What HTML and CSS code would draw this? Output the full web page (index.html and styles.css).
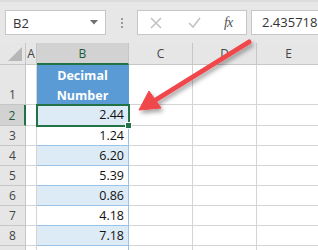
FILE: index.html
```html
<!DOCTYPE html>
<html lang="en">
<head>
    <meta charset="UTF-8">
    <title>Decimal Number</title>
    <link rel="stylesheet" href="styles.css">
</head>
<body>
    <div class="sheet">
        <div class="bar">
            <div class="namebox">
                <span>B2</span>
                <svg class="caret" width="8" height="5" viewBox="0 0 8 5"><path d="M0 0h8L4 4.5z" fill="#6f6f6f"/></svg>
            </div>
            <div class="grip"><i></i><i></i><i></i></div>
            <div class="fbtns">
                <svg class="btn-x" width="12" height="12" viewBox="0 0 12 12"><path d="M1 1l10 10M11 1L1 11" stroke="#c2c2c2" stroke-width="1.6" fill="none"/></svg>
                <svg class="btn-ok" width="13" height="11" viewBox="0 0 13 11"><path d="M1 6l4 4 7-9" stroke="#c2c2c2" stroke-width="1.6" fill="none"/></svg>
                <span class="fx">fx</span>
            </div>
            <div class="formula">2.435718</div>
        </div>

        <div class="grid">
            <div class="hd corner"><span class="tri"></span></div>
            <div class="hd col">A</div>
            <div class="hd col sel">B</div>
            <div class="hd col">C</div>
            <div class="hd col">D</div>
            <div class="hd col">E</div>

            <div class="hd row">1</div>
            <div class="c"></div>
            <div class="c title">Decimal<br>Number</div>
            <div class="c"></div><div class="c"></div><div class="c"></div>

            <div class="hd row rsel">2</div>
            <div class="c"></div>
            <div class="c num alt active">2.44</div>
            <div class="c"></div><div class="c"></div><div class="c"></div>

            <div class="hd row">3</div>
            <div class="c"></div>
            <div class="c num">1.24</div>
            <div class="c"></div><div class="c"></div><div class="c"></div>

            <div class="hd row">4</div>
            <div class="c"></div>
            <div class="c num alt">6.20</div>
            <div class="c"></div><div class="c"></div><div class="c"></div>

            <div class="hd row">5</div>
            <div class="c"></div>
            <div class="c num">5.39</div>
            <div class="c"></div><div class="c"></div><div class="c"></div>

            <div class="hd row">6</div>
            <div class="c"></div>
            <div class="c num alt">0.86</div>
            <div class="c"></div><div class="c"></div><div class="c"></div>

            <div class="hd row">7</div>
            <div class="c"></div>
            <div class="c num">4.18</div>
            <div class="c"></div><div class="c"></div><div class="c"></div>

            <div class="hd row">8</div>
            <div class="c"></div>
            <div class="c num alt">7.18</div>
            <div class="c"></div><div class="c"></div><div class="c"></div>

            <div class="hd row"></div>
            <div class="c"></div>
            <div class="c num"></div>
            <div class="c"></div><div class="c"></div><div class="c"></div>
        </div>

        <!-- callout arrow over the sheet -->
        <svg class="arrow" width="318" height="250" viewBox="0 0 318 250">
            <defs>
                <filter id="shadow" x="-20%" y="-20%" width="140%" height="140%">
                    <feDropShadow dx="2" dy="3" stdDeviation="2" flood-color="#000" flood-opacity="0.35"/>
                </filter>
            </defs>
            <g filter="url(#shadow)" fill="#f0474c" stroke="#f0474c">
                <line x1="249" y1="42" x2="154" y2="101" stroke-width="5" stroke-linecap="round"/>
                <polygon points="139,110 149,91 161,108" stroke-width="1" stroke-linejoin="round"/>
            </g>
        </svg>
    </div>
</body>
</html>
```

FILE: styles.css
```css
body {
    margin: 0;
    background: #fff;
    font-family: "Open Sans", "Noto Sans", sans-serif;
}
.sheet {
    position: relative;
    width: 318px;
    height: 250px;
    overflow: hidden;
}
.bar {
    height: 43px;
    box-sizing: border-box;
    padding: 10px 0 0 5px;
    background: #e7e7e7;
    border-top: 2px solid #dcdcdc;
    display: flex;
    align-items: flex-start;
}
.bar > div {
    margin-top: -2px;
}
.namebox {
    width: 101px;
    height: 25px;
    box-sizing: border-box;
    border: 1px solid #c6c6c6;
    background: #fff;
    display: flex;
    align-items: center;
    justify-content: space-between;
    padding: 0 7px 0 7px;
    font-size: 13px;
    color: #333;
}
.grip {
    width: 31px;
    height: 25px;
    display: flex;
    flex-direction: column;
    align-items: center;
    justify-content: center;
    gap: 2px;
}
.grip i {
    width: 2px;
    height: 2px;
    background: #9a9a9a;
}
.fbtns {
    width: 110px;
    height: 25px;
    box-sizing: border-box;
    border: 1px solid #c6c6c6;
    background: #fff;
    display: flex;
    align-items: center;
    padding-left: 12px;
}
.btn-ok {
    margin-left: 26px;
}
.fx {
    margin-left: 23px;
    font-family: "Liberation Serif", serif;
    font-style: italic;
    font-size: 14px;
    color: #555;
    letter-spacing: -1px;
}
.formula {
    flex: 1;
    margin-left: 4px;
    height: 25px;
    box-sizing: border-box;
    border: 1px solid #c6c6c6;
    border-right: none;
    background: #fff;
    padding-left: 10px;
    font-size: 13px;
    line-height: 23px;
    color: #333;
}
.grid {
    display: grid;
    grid-template-columns: 26px 11px 92px 64px 64px 64px;
    grid-template-rows: 22px 40px 21px repeat(7, 20px);
}
.grid > div {
    box-sizing: border-box;
    border-right: 1px solid #d4d4d4;
    border-bottom: 1px solid #d4d4d4;
}
.hd {
    background: #e6e6e6;
    color: #444;
    font-size: 12px;
    display: flex;
    align-items: center;
    justify-content: center;
}
.grid > .hd {
    border-color: #c6c6c6;
}
.corner {
    position: relative;
}
.tri {
    position: absolute;
    right: 3px;
    bottom: 3px;
    width: 0;
    height: 0;
    border-left: 14px solid transparent;
    border-bottom: 14px solid #b7b7b7;
}
.grid > .sel {
    background: #d2d2d2;
    color: #1d5b38;
    border-bottom: 2px solid #217346;
}
.row {
    align-items: flex-end;
    padding-bottom: 1px;
}
.grid > .rsel {
    background: #d2d2d2;
    color: #1d5b38;
    border-right: 2px solid #217346;
}
.grid > .title {
    background: #5b9bd5;
    border-right-color: #5b9bd5;
    border-bottom-color: #5b9bd5;
    color: #fff;
    font-weight: bold;
    font-size: 12.5px;
    line-height: 20px;
    padding-top: 1px;
    text-align: center;
}
.num {
    text-align: right;
    padding-right: 4px;
    font-size: 12.5px;
    line-height: 20px;
    color: #111;
}
.grid > .num {
    border-right-color: #9bc2e6;
    border-bottom-color: #9bc2e6;
}
.alt {
    background: #ddebf7;
}
.active {
    position: relative;
    outline: 2px solid #217346;
    outline-offset: -1px;
}
.active::after {
    content: "";
    position: absolute;
    right: -4px;
    bottom: -4px;
    width: 5px;
    height: 5px;
    background: #217346;
    border: 1px solid #fff;
}
.arrow {
    position: absolute;
    left: 0;
    top: 0;
    pointer-events: none;
}
```
